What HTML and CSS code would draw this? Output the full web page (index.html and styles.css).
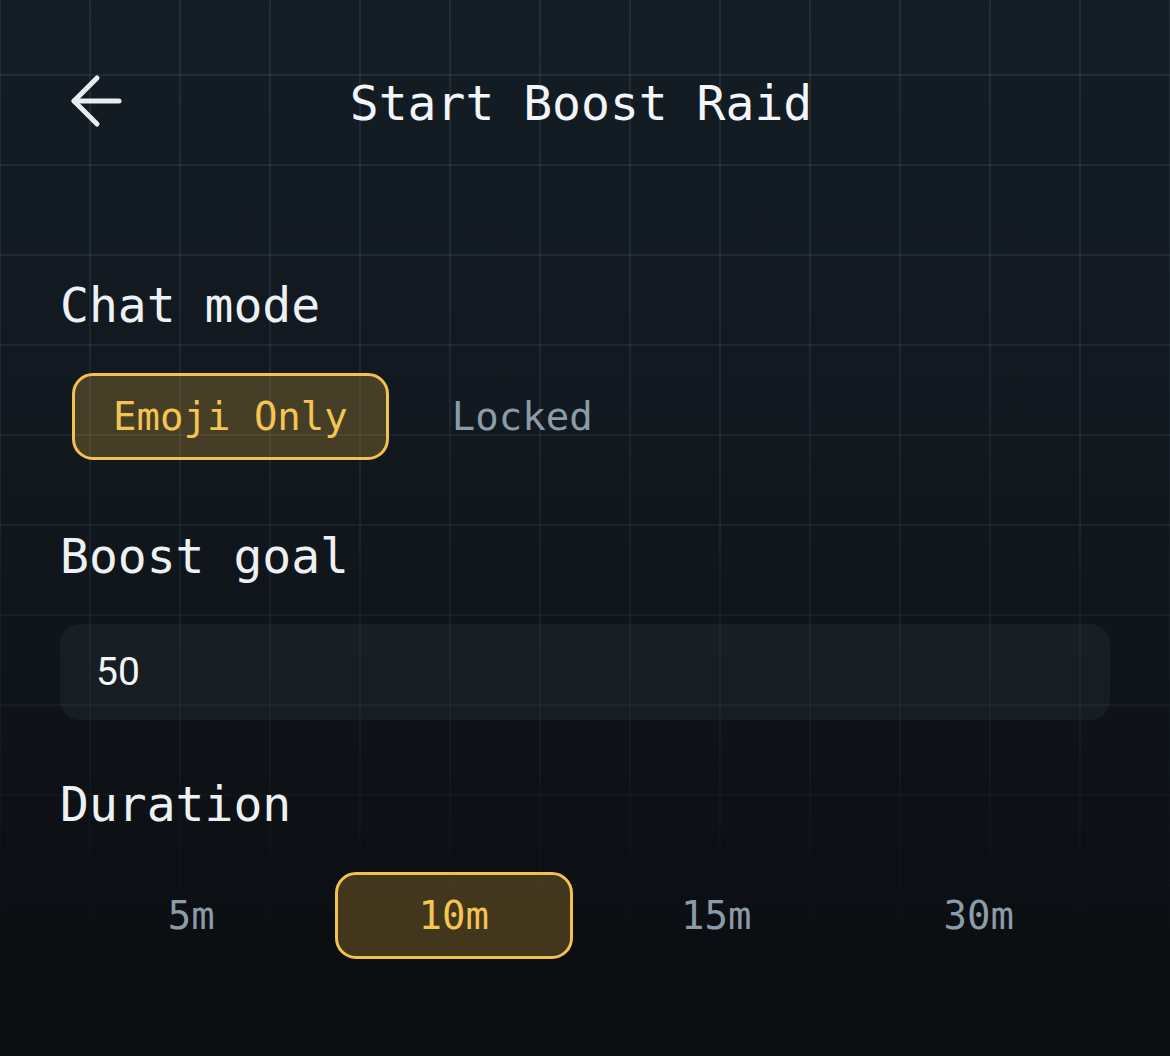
FILE: index.html
```html
<!DOCTYPE html>
<html lang="en">
<head>
<meta charset="utf-8">
<title>Start Boost Raid</title>
<link rel="stylesheet" href="styles.css">
</head>
<body>
<div class="screen">
  <header class="topbar">
    <button class="back" aria-label="Back">
      <svg width="60" height="60" viewBox="0 0 60 60" fill="none" stroke="currentColor" stroke-width="5" stroke-linecap="round" stroke-linejoin="round">
        <path d="M53 28H8"/>
        <path d="M31 5L8 28L31 51"/>
      </svg>
    </button>
    <h1 class="title">Start Boost Raid</h1>
    <span class="spacer"></span>
  </header>

  <main class="content">
    <section class="field">
      <h2 class="label">Chat mode</h2>
      <div class="chips">
        <button class="chip active">Emoji Only</button>
        <button class="chip">Locked</button>
      </div>
    </section>

    <section class="field">
      <h2 class="label">Boost goal</h2>
      <input class="input" type="text" value="50">
    </section>

    <section class="field">
      <h2 class="label">Duration</h2>
      <div class="chips chips-grid">
        <button class="chip">5m</button>
        <button class="chip active">10m</button>
        <button class="chip">15m</button>
        <button class="chip">30m</button>
      </div>
    </section>
  </main>
</div>
</body>
</html>
```

FILE: styles.css
```css
* { box-sizing: border-box; }

html, body {
  margin: 0;
  padding: 0;
}

body {
  min-height: 1056px;
  background: linear-gradient(to bottom, #131c24 0%, #121920 35%, #0f1419 65%, #0b0d11 92%, #0b0d11 100%);
  color: #eef1f4;
  font-family: "DejaVu Sans Mono", "Liberation Mono", monospace;
}

.screen {
  position: relative;
  min-height: 1056px;
}

.screen::before {
  content: "";
  position: absolute;
  inset: 0;
  pointer-events: none;
  background-image:
    linear-gradient(to right, rgba(140, 175, 200, 0.12) 2px, transparent 2px),
    linear-gradient(to bottom, rgba(140, 175, 200, 0.12) 2px, transparent 2px);
  background-size: 90px 90px;
  background-position: -1px 74px;
  -webkit-mask-image: linear-gradient(to bottom, #000 0%, rgba(0,0,0,0.75) 45%, rgba(0,0,0,0.22) 80%, transparent 92%);
  mask-image: linear-gradient(to bottom, #000 0%, rgba(0,0,0,0.75) 45%, rgba(0,0,0,0.22) 80%, transparent 92%);
}

.topbar {
  position: relative;
  display: grid;
  grid-template-columns: 72px 1fr 80px;
  align-items: center;
  padding: 67px 60px 0;
}

.back {
  width: 72px;
  height: 72px;
  padding: 0;
  border: none;
  background: none;
  color: #e9edf4;
  display: flex;
  align-items: center;
  justify-content: center;
}

.back svg { display: block; }

.title {
  margin: 0;
  text-align: center;
  font-size: 48px;
  line-height: 72px;
  font-weight: normal;
  color: #f3f5f8;
}

.content {
  position: relative;
  padding: 130px 60px 0;
}

.field {
  display: flex;
  flex-direction: column;
  margin-bottom: 48px;
}

.label {
  margin: 0 0 20px;
  font-size: 48px;
  line-height: 72px;
  font-weight: normal;
  color: #eef1f4;
}

.chips {
  display: flex;
  gap: 22px;
  padding: 12px;
}

.chips-grid {
  display: grid;
  grid-template-columns: repeat(4, 1fr);
  gap: 24px;
}

.chip {
  height: 87px;
  padding: 0 38px;
  border: 3px solid transparent;
  border-radius: 21px;
  background: none;
  font-family: "DejaVu Sans Mono", "Liberation Mono", monospace;
  font-size: 39px;
  color: #8b9ca8;
  display: flex;
  align-items: center;
  justify-content: center;
}

.chip.active {
  border-color: #f2c14f;
  background: rgba(240, 186, 64, 0.24);
  color: #f6c452;
}

.input {
  display: block;
  width: 100%;
  height: 96px;
  margin-top: 12px;
  padding: 0 36px;
  border: none;
  border-radius: 20px;
  background: rgba(200, 215, 235, 0.05);
  font-family: Roboto, "Noto Sans", sans-serif;
  font-size: 39px;
  color: #f3f5f7;
  outline: none;
}
```
